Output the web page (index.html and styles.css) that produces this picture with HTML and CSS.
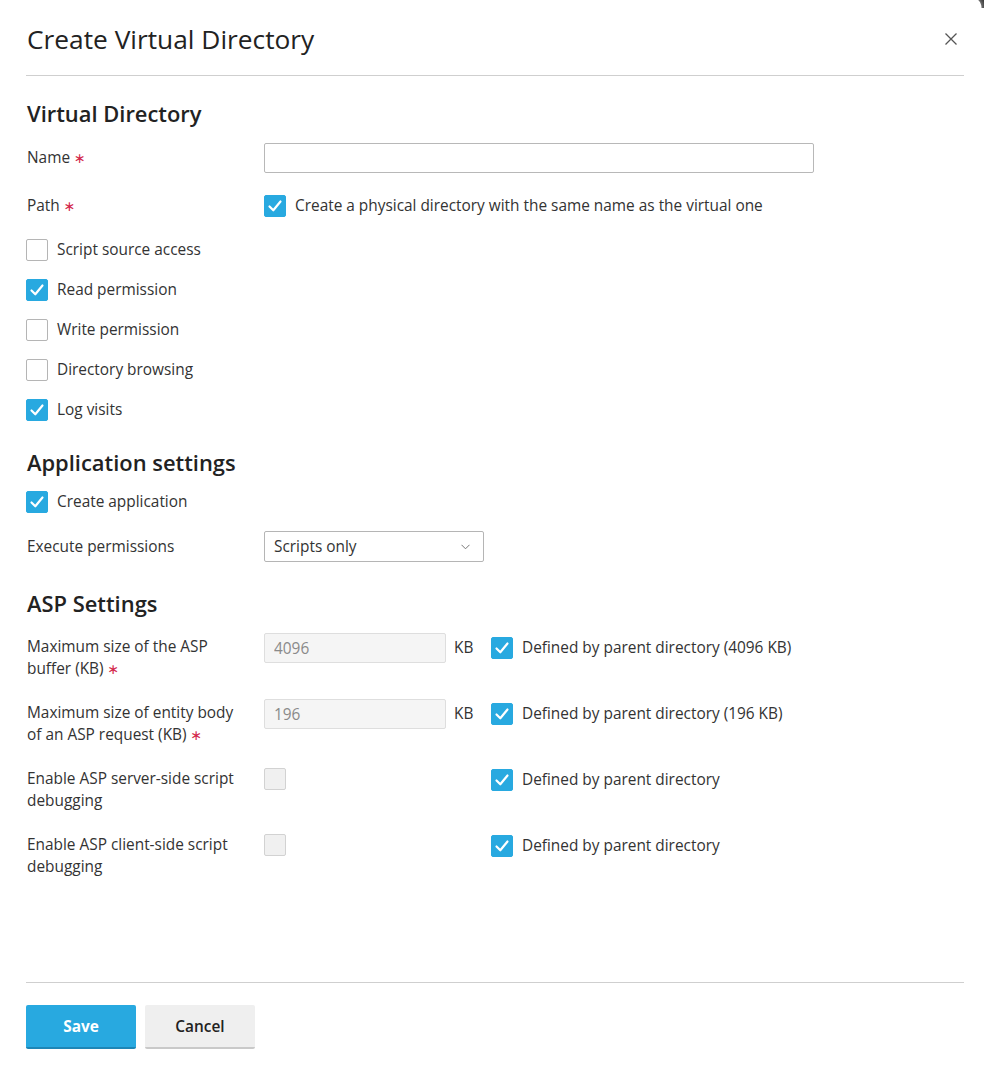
FILE: index.html
```html
<!DOCTYPE html>
<html lang="en">
<head>
<meta charset="utf-8">
<title>Create Virtual Directory</title>
<link rel="stylesheet" href="styles.css">
</head>
<body>
<div class="corner"></div>
<div class="dialog">
  <header class="dlg-header">
    <h1 class="dlg-title">Create Virtual Directory</h1>
    <button class="close" aria-label="Close">
      <svg width="12" height="12" viewBox="0 0 12 12"><path d="M0.5 0.5L11.5 11.5M11.5 0.5L0.5 11.5" stroke="#555" stroke-width="1.3" fill="none"/></svg>
    </button>
  </header>
  <main class="dlg-body">
    <h2 class="section-title first">Virtual Directory</h2>
    <div class="row">
      <div class="label">Name <span class="req">∗</span></div>
      <div class="field"><input class="text-input wide" type="text"></div>
    </div>
    <div class="row path-row">
      <div class="label">Path <span class="req">∗</span></div>
      <div class="field"><label class="cb"><span class="box checked"></span><span>Create a physical directory with the same name as the virtual one</span></label></div>
    </div>
    <div class="cb-list">
      <label class="cb"><span class="box"></span><span>Script source access</span></label>
      <label class="cb"><span class="box checked"></span><span>Read permission</span></label>
      <label class="cb"><span class="box"></span><span>Write permission</span></label>
      <label class="cb"><span class="box"></span><span>Directory browsing</span></label>
      <label class="cb"><span class="box checked"></span><span>Log visits</span></label>
    </div>

    <h2 class="section-title">Application settings</h2>
    <label class="cb app-cb"><span class="box checked"></span><span>Create application</span></label>
    <div class="row exec-row">
      <div class="label">Execute permissions</div>
      <div class="field">
        <div class="select"><span>Scripts only</span>
          <svg width="9" height="6" viewBox="0 0 9 6"><path d="M0.5 0.8L4.5 4.8L8.5 0.8" stroke="#777" stroke-width="1" fill="none"/></svg>
        </div>
      </div>
    </div>

    <h2 class="section-title asp-title">ASP Settings</h2>
    <div class="asp-grid">
      <div class="asp-label"><span class="line">Maximum size of the ASP</span><span class="line">buffer (KB) <span class="req">∗</span></span></div>
      <div><input class="text-input num" type="text" value="4096" disabled></div>
      <div class="unit">KB</div>
      <label class="cb asp-cb"><span class="box checked"></span><span>Defined by parent directory (4096 KB)</span></label>

      <div class="asp-label"><span class="line">Maximum size of entity body</span><span class="line">of an ASP request (KB) <span class="req">∗</span></span></div>
      <div><input class="text-input num" type="text" value="196" disabled></div>
      <div class="unit">KB</div>
      <label class="cb asp-cb"><span class="box checked"></span><span>Defined by parent directory (196 KB)</span></label>

      <div class="asp-label"><span class="line">Enable ASP server-side script</span><span class="line">debugging</span></div>
      <div><span class="box disabled asp-box"></span></div>
      <div></div>
      <label class="cb asp-cb"><span class="box checked"></span><span>Defined by parent directory</span></label>

      <div class="asp-label"><span class="line">Enable ASP client-side script</span><span class="line">debugging</span></div>
      <div><span class="box disabled asp-box"></span></div>
      <div></div>
      <label class="cb asp-cb"><span class="box checked"></span><span>Defined by parent directory</span></label>
    </div>
  </main>
  <footer class="dlg-footer">
    <button class="btn primary">Save</button>
    <button class="btn">Cancel</button>
  </footer>
</div>
</body>
</html>
```
FILE: styles.css
```css
* { box-sizing: border-box; }
html, body { margin: 0; padding: 0; background: #fff; }
body {
  font-family: "Open Sans", "Noto Sans", sans-serif;
  font-size: 15.4px;
  color: #333;
  position: relative;
  overflow: hidden;
}
.corner {
  position: absolute;
  top: 0;
  right: 0;
  width: 14px;
  height: 8px;
  background: radial-gradient(circle at 0 100%, transparent 11px, #6a6a6a 12px, #333 16px);
}
.dialog {
  height: 100vh;
  display: flex;
  flex-direction: column;
  padding: 0 20px 0 26px;
}
.dlg-header {
  height: 76px;
  flex: none;
  border-bottom: 1px solid #cfcfcf;
  display: flex;
  align-items: center;
  justify-content: space-between;
  padding-top: 3px;
}
.dlg-title {
  margin: 0 0 0 1px;
  font-size: 26.3px;
  font-weight: 400;
  color: #222;
  line-height: 36px;
}
.close {
  border: 0;
  background: none;
  padding: 0;
  margin-right: 7px;
  width: 12px;
  height: 12px;
  display: flex;
}
.dlg-body { flex: 1; }
.section-title {
  margin: 28px 0 0 1px;
  font-size: 21.9px;
  font-weight: 600;
  color: #222;
  line-height: 28px;
}
.section-title.first { margin-top: 24px; }
.section-title.asp-title { margin-top: 28px; }
.row {
  display: grid;
  grid-template-columns: 238px 1fr;
  align-items: center;
  margin-top: 15px;
}
.label { padding-left: 1px; line-height: 22px; }
.req {
  color: #d3284b;
  font-family: "DejaVu Sans", sans-serif;
  font-size: 14px;
  line-height: 1;
}
.path-row { margin-top: 22px; }
.text-input {
  font-family: inherit;
  font-size: 15.4px;
  height: 30px;
  border: 1px solid #b8b8b8;
  border-radius: 2px;
  padding: 0 9px;
  color: #333;
  background: #fff;
  outline: none;
}
.wide { width: 550px; }
.num { width: 182px; background: #f5f5f5; border-color: #dedede; color: #8a8a8a; }
.cb {
  display: flex;
  align-items: center;
  gap: 9px;
  line-height: 22px;
}
.box {
  width: 22px;
  height: 22px;
  flex: none;
  border: 1px solid #b5b5b5;
  border-radius: 2px;
  background: #fff;
  display: inline-block;
}
.box.checked {
  border-color: #28a9e0;
  background: #28a9e0 url("data:image/svg+xml,%3Csvg xmlns='http://www.w3.org/2000/svg' width='22' height='22' viewBox='0 0 22 22'%3E%3Cpath d='M5.5 11.5L9.3 15.3L16.5 6.5' stroke='white' stroke-width='2.2' fill='none' stroke-linecap='round' stroke-linejoin='round'/%3E%3C/svg%3E") no-repeat center;
}
.box.disabled { background: #f0f0f0; border-color: #d2d2d2; }
.cb-list {
  display: flex;
  flex-direction: column;
  gap: 18px;
  margin-top: 22px;
}
.app-cb { margin-top: 14px; }
.exec-row { margin-top: 18px; }
.select {
  width: 220px;
  height: 31px;
  border: 1px solid #b5b5b5;
  border-radius: 2px;
  display: flex;
  align-items: center;
  justify-content: space-between;
  padding: 0 13px 0 9px;
  color: #333;
}
.asp-grid {
  display: grid;
  grid-template-columns: 238px 182px 45px 1fr;
  row-gap: 19px;
  margin-top: 15px;
  align-items: start;
}
.asp-label {
  padding: 3px 10px 0 1px;
  line-height: 22px;
  display: flex;
  flex-direction: column;
  align-items: flex-start;
}
.asp-label .line { white-space: nowrap; }
.unit { padding: 4px 0 0 8px; line-height: 22px; }
.asp-cb { margin-top: 4px; }
.asp-box { margin-top: 3px; display: block; }
.dlg-footer {
  flex: none;
  border-top: 1px solid #cfcfcf;
  padding: 22px 0 24px;
  display: flex;
  gap: 9px;
}
.btn {
  width: 110px;
  height: 44px;
  border: 0;
  border-bottom: 2px solid #c9c9c9;
  border-radius: 2px;
  background: #efefef;
  font-family: inherit;
  font-size: 15.4px;
  font-weight: 600;
  color: #222;
  padding: 0;
}
.btn.primary {
  background: #28a9e0;
  border-bottom-color: #1d86b6;
  color: #fff;
  font-weight: 700;
}
```
